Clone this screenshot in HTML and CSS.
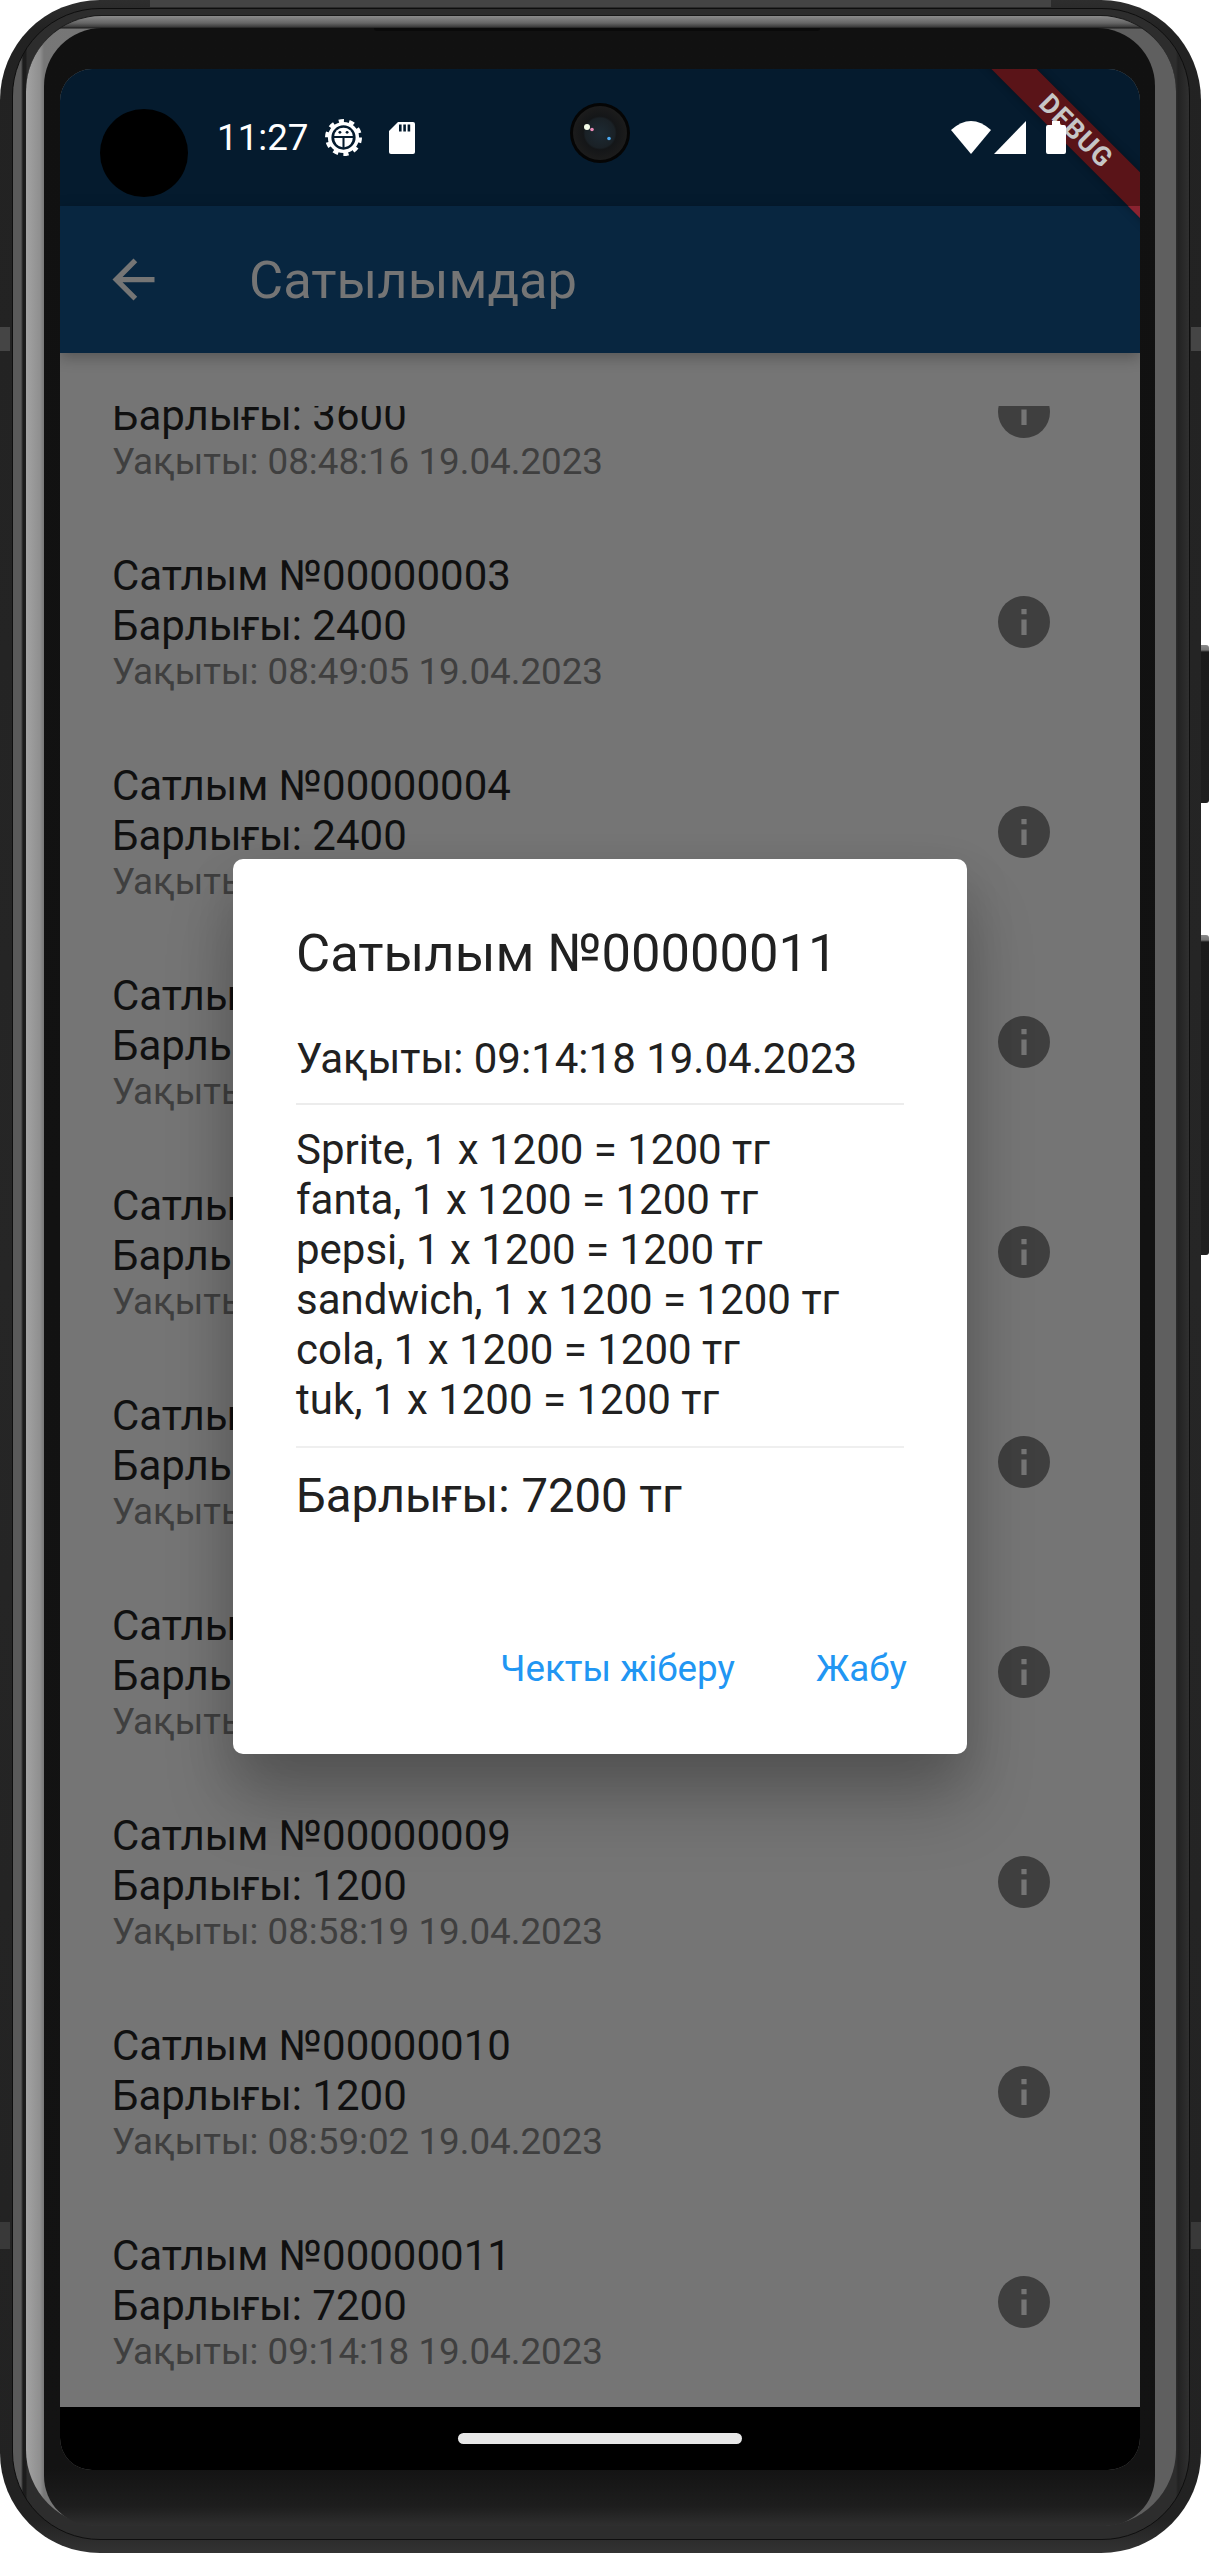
FILE: index.html
```html
<!DOCTYPE html>
<html lang="kk">
<head>
<meta charset="utf-8">
<title>Сатылымдар</title>
<link rel="stylesheet" href="styles.css">
</head>
<body>
<div class="device">
  <div class="btn btn-power"></div>
  <div class="btn btn-volume"></div>
  <div class="top-plate"></div>
  <div class="antenna antenna-l1"></div>
  <div class="antenna antenna-r1"></div>
  <div class="antenna antenna-l2"></div>
  <div class="antenna antenna-r2"></div>
  <div class="rim">
    <div class="glass">
      <div class="bezel">
        <div class="speaker"></div>
        <main class="screen">
          <header class="statusbar">
            <span class="clock">11:27</span>
            <svg class="ico-gear" viewBox="0 0 36 36" aria-hidden="true">
              <circle cx="18" cy="18" r="16" fill="none" stroke="#fff" stroke-width="4" stroke-dasharray="5 5.050"/>
              <circle cx="18" cy="18" r="13.500" fill="none" stroke="#fff" stroke-width="3.400"/>
              <path d="M9 16.500a9 8 0 0 1 18 0z" fill="#fff"/>
              <path d="M9 18.500h8v9a9 9 0 0 1-8-9zM19 18.500h8a9 9 0 0 1-8 9z" fill="#fff"/>
              <circle cx="14.500" cy="13" r="1.400" fill="#051b2e"/>
              <circle cx="21.500" cy="13" r="1.400" fill="#051b2e"/>
            </svg>
            <svg class="ico-sd" viewBox="0 0 26 32" aria-hidden="true">
              <path d="M9 0H24a2 2 0 0 1 2 2V30a2 2 0 0 1-2 2H2a2 2 0 0 1-2-2V9z" fill="#fff"/>
              <path d="M10 2.500h2.600v7H10zM14.300 2.500h2.600v7h-2.600zM18.600 2.500h2.600v7h-2.600z" fill="#051b2e"/>
            </svg>
            <span class="status-right">
              <svg class="ico-wifi" viewBox="0 0 40 33" aria-hidden="true"><path d="M0 9Q20-9 40 9L20 33z" fill="#fff"/></svg>
              <svg class="ico-signal" viewBox="0 0 32 33" aria-hidden="true"><path d="M0 33L32 0V33z" fill="#fff"/></svg>
              <svg class="ico-battery" viewBox="0 0 20 33" aria-hidden="true"><path d="M6 0h8v4h4a2 2 0 0 1 2 2V31a2 2 0 0 1-2 2H2a2 2 0 0 1-2-2V6a2 2 0 0 1 2-2h4z" fill="#fff"/></svg>
            </span>
          </header>
          <div class="ribbon">DEBUG</div>
          <div class="ribbon-tip"></div>
          <div class="punch"></div>
          <svg class="camera" viewBox="0 0 60 60" aria-hidden="true">
            <defs>
              <radialGradient id="lens" cx="50%" cy="50%" r="50%">
                <stop offset="0" stop-color="#1d2a33"/>
                <stop offset=".55" stop-color="#1a2126"/>
                <stop offset=".62" stop-color="#141618"/>
                <stop offset="1" stop-color="#1c1c1c"/>
              </radialGradient>
            </defs>
            <circle cx="30" cy="30" r="30" fill="#050505"/>
            <circle cx="30" cy="30" r="27" fill="url(#lens)"/>
            <circle cx="17" cy="24" r="3" fill="#f4fbe8"/>
            <circle cx="22" cy="26.500" r="1.800" fill="#e98bb8"/>
            <circle cx="39" cy="35.500" r="1.800" fill="#4aa8f0"/>
          </svg>

          <div class="appbar">
            <svg class="ico-back" viewBox="0 0 24 24" aria-hidden="true"><path d="M20 11H7.830l5.590-5.590L12 4l-8 8 8 8 1.410-1.410L7.830 13H20v-2z" fill="#757575"/></svg>
            <h1 class="appbar-title">Сатылымдар</h1>
          </div>

          <div class="list-viewport">
            <ul class="list">
              <li class="row"><div class="row-text"><div class="row-title">Сатлым №00000002</div><div class="row-title">Барлығы: 3600</div><div class="row-sub">Уақыты: 08:48:16 19.04.2023</div></div><svg class="ico-info" viewBox="0 0 20 20" aria-hidden="true"><circle cx="10" cy="10" r="10" fill="#3f3f3f"/><path d="M9 9h2v6H9zM9 5h2v2H9z" fill="#757575"/></svg></li>
              <li class="row"><div class="row-text"><div class="row-title">Сатлым №00000003</div><div class="row-title">Барлығы: 2400</div><div class="row-sub">Уақыты: 08:49:05 19.04.2023</div></div><svg class="ico-info" viewBox="0 0 20 20" aria-hidden="true"><circle cx="10" cy="10" r="10" fill="#3f3f3f"/><path d="M9 9h2v6H9zM9 5h2v2H9z" fill="#757575"/></svg></li>
              <li class="row"><div class="row-text"><div class="row-title">Сатлым №00000004</div><div class="row-title">Барлығы: 2400</div><div class="row-sub">Уақыты: 08:50:12 19.04.2023</div></div><svg class="ico-info" viewBox="0 0 20 20" aria-hidden="true"><circle cx="10" cy="10" r="10" fill="#3f3f3f"/><path d="M9 9h2v6H9zM9 5h2v2H9z" fill="#757575"/></svg></li>
              <li class="row"><div class="row-text"><div class="row-title">Сатлым №00000005</div><div class="row-title">Барлығы: 1200</div><div class="row-sub">Уақыты: 08:52:20 19.04.2023</div></div><svg class="ico-info" viewBox="0 0 20 20" aria-hidden="true"><circle cx="10" cy="10" r="10" fill="#3f3f3f"/><path d="M9 9h2v6H9zM9 5h2v2H9z" fill="#757575"/></svg></li>
              <li class="row"><div class="row-text"><div class="row-title">Сатлым №00000006</div><div class="row-title">Барлығы: 1200</div><div class="row-sub">Уақыты: 08:54:03 19.04.2023</div></div><svg class="ico-info" viewBox="0 0 20 20" aria-hidden="true"><circle cx="10" cy="10" r="10" fill="#3f3f3f"/><path d="M9 9h2v6H9zM9 5h2v2H9z" fill="#757575"/></svg></li>
              <li class="row"><div class="row-text"><div class="row-title">Сатлым №00000007</div><div class="row-title">Барлығы: 1200</div><div class="row-sub">Уақыты: 08:55:41 19.04.2023</div></div><svg class="ico-info" viewBox="0 0 20 20" aria-hidden="true"><circle cx="10" cy="10" r="10" fill="#3f3f3f"/><path d="M9 9h2v6H9zM9 5h2v2H9z" fill="#757575"/></svg></li>
              <li class="row"><div class="row-text"><div class="row-title">Сатлым №00000008</div><div class="row-title">Барлығы: 1200</div><div class="row-sub">Уақыты: 08:57:06 19.04.2023</div></div><svg class="ico-info" viewBox="0 0 20 20" aria-hidden="true"><circle cx="10" cy="10" r="10" fill="#3f3f3f"/><path d="M9 9h2v6H9zM9 5h2v2H9z" fill="#757575"/></svg></li>
              <li class="row"><div class="row-text"><div class="row-title">Сатлым №00000009</div><div class="row-title">Барлығы: 1200</div><div class="row-sub">Уақыты: 08:58:19 19.04.2023</div></div><svg class="ico-info" viewBox="0 0 20 20" aria-hidden="true"><circle cx="10" cy="10" r="10" fill="#3f3f3f"/><path d="M9 9h2v6H9zM9 5h2v2H9z" fill="#757575"/></svg></li>
              <li class="row"><div class="row-text"><div class="row-title">Сатлым №00000010</div><div class="row-title">Барлығы: 1200</div><div class="row-sub">Уақыты: 08:59:02 19.04.2023</div></div><svg class="ico-info" viewBox="0 0 20 20" aria-hidden="true"><circle cx="10" cy="10" r="10" fill="#3f3f3f"/><path d="M9 9h2v6H9zM9 5h2v2H9z" fill="#757575"/></svg></li>
              <li class="row"><div class="row-text"><div class="row-title">Сатлым №00000011</div><div class="row-title">Барлығы: 7200</div><div class="row-sub">Уақыты: 09:14:18 19.04.2023</div></div><svg class="ico-info" viewBox="0 0 20 20" aria-hidden="true"><circle cx="10" cy="10" r="10" fill="#3f3f3f"/><path d="M9 9h2v6H9zM9 5h2v2H9z" fill="#757575"/></svg></li>
            </ul>
          </div>

          <div class="navbar"><div class="nav-handle"></div></div>

          <section class="dialog">
            <h2 class="dialog-title">Сатылым №00000011</h2>
            <p class="dialog-time">Уақыты: 09:14:18 19.04.2023</p>
            <hr class="divider">
            <div class="dialog-items">
              <div>Sprite, 1 x 1200 = 1200 тг</div>
              <div>fanta, 1 x 1200 = 1200 тг</div>
              <div>pepsi, 1 x 1200 = 1200 тг</div>
              <div>sandwich, 1 x 1200 = 1200 тг</div>
              <div>cola, 1 x 1200 = 1200 тг</div>
              <div>tuk, 1 x 1200 = 1200 тг</div>
            </div>
            <hr class="divider divider-lower">
            <p class="dialog-total">Барлығы: 7200 тг</p>
            <div class="dialog-actions">
              <span class="action">Чекты жіберу</span>
              <span class="action">Жабу</span>
            </div>
          </section>
        </main>
      </div>
    </div>
  </div>
</div>
</body>
</html>
```
FILE: styles.css
```css
* { box-sizing: border-box; }
html, body { margin: 0; padding: 0; background: #fff; }
body { font-family: Roboto, "Noto Sans", sans-serif; width: 1209px; height: 2553px; overflow: hidden; }

/* device frame: nested rings */
.device {
  position: relative;
  width: 1201px;
  height: 2553px;
  padding: 8px 11px 13px 12px;
  border-radius: 100px;
  background: linear-gradient(180deg, #2e2e2e 0, #222 30px, #262626 50%, #222 2520px, #333 100%);
}
.rim {
  height: 100%;
  padding: 6px 13px 13px 13px;
  border-radius: 88px;
  background: linear-gradient(90deg, #5a5a5a 0, #5a5a5a 8px, #1c1c1c 10px, #1c1c1c 13px, #2d2d2d 14px, #2d2d2d 1163px, #222 1165px, #303030 100%);
  border: 1px solid #0e0e0e;
}
.glass {
  height: 100%;
  padding: 12px 21px 0 18px;
  border-radius: 76px;
  background: linear-gradient(180deg, #8b8b8b 0, #666 7px, #3a3a3a 11px, #1a1a1a 12px, transparent 13px),
    linear-gradient(90deg, #a3a3a3 0, #8f8f8f 14px, #777 18px, #5f5f5f 60%, #5f5f5f 100%);
  border-top: 1px solid #191919;
}
.bezel {
  position: relative;
  height: 100%;
  padding: 41px 15px 56px 16px;
  border-radius: 58px 58px 50px 50px;
  background: linear-gradient(180deg, #111 0, #131313 2440px, #1d1d1d 2478px, #2f2f2f 100%);
}
.top-plate {
  position: absolute;
  left: 150px;
  top: 0;
  width: 901px;
  height: 7px;
  background: #444;
}
.speaker {
  position: absolute;
  left: 330px;
  top: 0;
  width: 446px;
  height: 3px;
  background: #0a0a0a;
  border-radius: 0 0 4px 4px;
}
.antenna { position: absolute; width: 10px; height: 24px; background: #454545; }
.antenna-l1 { left: 0; top: 327px; }
.antenna-r1 { right: 0; top: 327px; }
.antenna-l2 { left: 0; top: 2222px; height: 27px; background: #393939; }
.antenna-r2 { right: 0; top: 2222px; height: 27px; background: #393939; }
.btn {
  position: absolute;
  left: 1201px;
  width: 8px;
  background: linear-gradient(180deg, #8a8a8a 0, #777 5px, #1a1a1a 7px, #1f1f1f 100%);
  border-radius: 0 3px 3px 0;
}
.btn-power { top: 645px; height: 158px; }
.btn-volume { top: 935px; height: 320px; }

/* screen */
.screen {
  position: relative;
  display: flex;
  flex-direction: column;
  width: 1080px;
  height: 2401px;
  margin: 0;
  overflow: hidden;
  border-radius: 32px;
  background: #757575;
}
.statusbar {
  display: flex;
  align-items: center;
  flex: none;
  height: 137px;
  padding: 0 74px 0 157px;
  background: #051b2e;
}
.clock { position: relative; z-index: 4; color: #fff; font-size: 36.75px; line-height: 43px; }
.ico-gear { position: relative; z-index: 4; width: 37px; height: 37px; margin-left: 16px; }
.ico-sd { position: relative; z-index: 4; width: 26px; height: 32px; margin-left: 27px; }
.status-right { position: relative; z-index: 4; display: flex; align-items: center; margin-left: auto; }
.ico-wifi { width: 40px; height: 33px; }
.ico-signal { width: 32px; height: 33px; margin-left: 3px; }
.ico-battery { width: 20px; height: 33px; margin-left: 20px; }

.ribbon {
  position: absolute;
  left: 866px;
  top: 46px;
  z-index: 3;
  width: 300px;
  height: 32px;
  transform: rotate(45deg);
  background: #5a1418;
  box-shadow: 0 0 9px rgba(0, 0, 0, .35);
  color: #c6c6c6;
  font-size: 27px;
  font-weight: 700;
  line-height: 32px;
  letter-spacing: 1px;
  text-align: center;
}
.ribbon-tip {
  position: absolute;
  left: 1068px;
  top: 137px;
  z-index: 3;
  width: 12px;
  height: 12px;
  background: #8b2330;
  clip-path: polygon(0 0, 100% 0, 100% 100%);
}
.punch {
  position: absolute;
  left: 40px;
  top: 40px;
  z-index: 5;
  width: 88px;
  height: 88px;
  border-radius: 50%;
  background: #000;
}
.camera { position: absolute; left: 510px; top: 34px; z-index: 5; width: 60px; height: 60px; }

.appbar {
  position: relative;
  z-index: 1;
  display: flex;
  align-items: center;
  flex: none;
  height: 147px;
  padding-left: 42px;
  background: #082640;
  box-shadow: 0 4px 14px rgba(0, 0, 0, .28);
}
.ico-back { width: 63px; height: 63px; flex: none; margin-right: 84px; }
.appbar-title { margin: 0; color: #757575; font-size: 52.5px; font-weight: 400; line-height: 62px; }

.list-viewport { flex: 1; margin-top: 53px; overflow: hidden; }
.list { margin: -99px 0 0; padding: 0; list-style: none; }
.row {
  display: flex;
  align-items: center;
  justify-content: space-between;
  height: 210px;
  padding: 0 90px 0 52px;
}
.row-title { color: #101010; font-size: 42px; line-height: 50px; }
.row-sub { margin-top: -1px; color: #3f3f3f; font-size: 36.75px; line-height: 43px; }
.ico-info { width: 52px; height: 52px; flex: none; }

.navbar {
  display: flex;
  align-items: flex-start;
  justify-content: center;
  flex: none;
  height: 63px;
  padding-top: 26px;
  background: #000;
}
.nav-handle { width: 284px; height: 11px; border-radius: 6px; background: #e8e8e8; }

/* dialog */
.dialog {
  position: absolute;
  left: 173px;
  top: 790px;
  z-index: 2;
  width: 734px;
  height: 895px;
  padding: 63px 63px 0;
  border-radius: 10px;
  background: #fff;
  color: #212121;
  box-shadow: 0 50px 70px rgba(0, 0, 0, .2), 0 20px 50px rgba(0, 0, 0, .14);
}
.dialog-title { margin: 0; font-size: 52.5px; font-weight: 400; line-height: 62px; }
.dialog-time { margin: 50px 0 0; font-size: 42px; line-height: 49px; }
.divider { height: 2px; margin: 20px 0; border: 0; background: #ececec; }
.divider-lower { margin: 21px 0 20px; background: #efefef; }
.dialog-items { font-size: 42px; line-height: 50px; }
.dialog-total { margin: 0; font-size: 47.25px; line-height: 56px; }
.dialog-actions {
  display: flex;
  justify-content: flex-end;
  gap: 81px;
  margin: 123px -3px 0 0;
}
.action { color: #2196f3; font-size: 36.75px; line-height: 43px; }
```
